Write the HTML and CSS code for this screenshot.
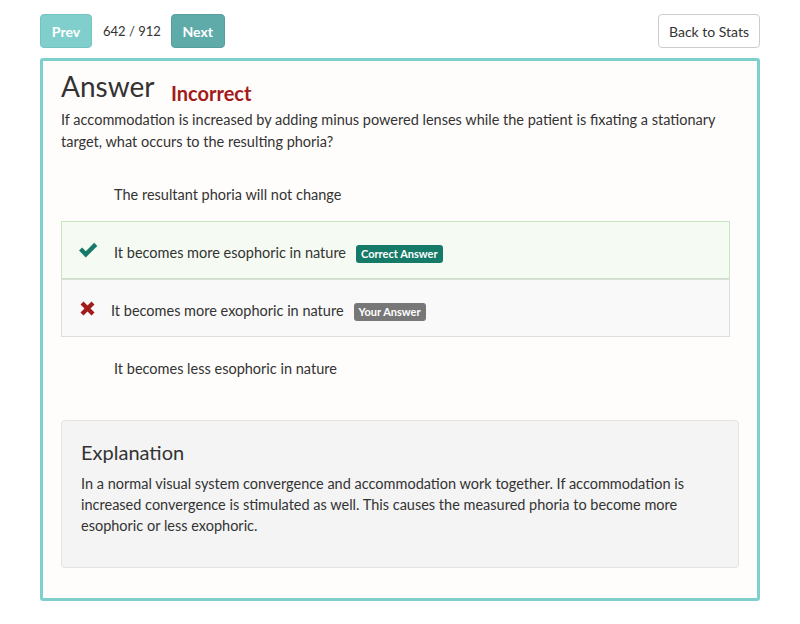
FILE: index.html
```html
<!DOCTYPE html>
<html>
<head>
<meta charset="utf-8">
<link rel="stylesheet" href="styles.css">
</head>
<body>
<div class="page">
  <div class="topbar">
    <div class="pager">
      <button class="btn btn-prev">Prev</button>
      <span class="count">642 / 912</span>
      <button class="btn btn-next">Next</button>
    </div>
    <button class="btn btn-back">Back to Stats</button>
  </div>

  <div class="card">
    <h1 class="title">Answer <span class="status">Incorrect</span></h1>
    <p class="question">If accommodation is increased by adding minus powered lenses while the patient is fixating a stationary target, what occurs to the resulting phoria?</p>

    <ul class="options">
      <li class="option">
        <span class="icon"></span>
        <span class="opt-text">The resultant phoria will not change</span>
      </li>
      <li class="option option-correct">
        <span class="icon">
          <svg width="21" height="17" viewBox="0 0 21 17"><path d="M1 8.6 L4.1 5.5 L7.8 9.2 L16.2 0.8 L19.3 3.9 L7.8 15.4 Z" fill="#17796a"/></svg>
        </span>
        <span class="opt-text">It becomes more esophoric in nature</span>
        <span class="badge badge-correct">Correct Answer</span>
      </li>
      <li class="option option-wrong">
        <span class="icon icon-x">
          <svg width="17" height="17" viewBox="0 0 17 17"><path d="M1.5 4.5 L4.5 1.5 L8.5 5.5 L12.5 1.5 L15.5 4.5 L11.5 8.5 L15.5 12.5 L12.5 15.5 L8.5 11.5 L4.5 15.5 L1.5 12.5 L5.5 8.5 Z" fill="#a11b1b"/></svg>
        </span>
        <span class="opt-text">It becomes more exophoric in nature</span>
        <span class="badge badge-yours">Your Answer</span>
      </li>
      <li class="option">
        <span class="icon"></span>
        <span class="opt-text">It becomes less esophoric in nature</span>
      </li>
    </ul>

    <div class="explanation">
      <h2 class="exp-title">Explanation</h2>
      <p class="exp-text">In a normal visual system convergence and accommodation work together. If accommodation is increased convergence is stimulated as well. This causes the measured phoria to become more esophoric or less exophoric.</p>
    </div>
  </div>
</div>
</body>
</html>
```

FILE: styles.css
```css
* { box-sizing: border-box; }
html, body { margin: 0; padding: 0; background: #ffffff; }
body {
  font-family: Lato, "Open Sans", sans-serif;
  color: #333333;
  font-size: 14.5px;
}
.page { padding: 14px 40px 0 40px; }

.topbar {
  display: flex;
  justify-content: space-between;
  align-items: center;
  height: 34px;
}
.pager { display: flex; align-items: center; }
.btn {
  font-family: Lato, "Open Sans", sans-serif;
  height: 34px;
  border-radius: 4px;
  font-size: 14px;
  cursor: pointer;
}
.btn-prev, .btn-next {
  color: #ffffff;
  font-weight: 700;
  border: 1px solid transparent;
}
.btn-prev { width: 52px; background: #80cfcd; border-color: #74c3c1; }
.btn-next { width: 54px; background: #5fabaa; border-color: #579f9e; }
.count { margin: 0 10px 0 11px; font-size: 13px; color: #333; }
.btn-back {
  width: 102px;
  background: #ffffff;
  border: 1px solid #cccccc;
  color: #333333;
}

.card {
  margin-top: 10px;
  border: 3px solid #7fcfcc;
  border-radius: 3px;
  background: #fffdfb;
  padding: 9px 18px 30px 18px;
}
.title {
  margin: 0;
  font-size: 28px;
  font-weight: 400;
  line-height: 33px;
  color: #333;
}
.status {
  display: inline-block;
  margin-left: 10px;
  font-size: 20px;
  line-height: 20px;
  font-weight: 700;
  color: #a31a1a;
  vertical-align: -4px;
}
.question {
  margin: 6px 0 0 0;
  line-height: 22px;
}

.options {
  list-style: none;
  margin: 10px 9px 0 0;
  padding: 0;
}
.option {
  display: flex;
  align-items: center;
  height: 58px;
  padding-left: 16px;
  border: 1px solid transparent;
}
.option-correct { background: #f5fbf2; border-color: #c8e3bf; }
.option-wrong { background: #f9f9f9; border-color: #dddddd; }
.icon {
  display: flex;
  align-items: center;
  width: 21px;
  height: 20px;
  margin-right: 15px;
}
.icon-x { width: 17px; margin-left: 1px; }
.opt-text { margin-top: 4px; }
.badge {
  display: inline-block;
  margin-left: 10px;
  margin-top: 7px;
  padding: 0 5px;
  height: 18px;
  line-height: 18px;
  font-size: 11px;
  font-weight: 700;
  color: #ffffff;
  border-radius: 3px;
}
.badge-correct { background: #167a68; }
.badge-yours { background: #777777; }

.explanation {
  margin-top: 25px;
  background: #f4f4f4;
  border: 1px solid #e3e3e3;
  border-radius: 4px;
  padding: 17px 19px 31px 19px;
}
.exp-title {
  margin: 0;
  font-size: 20px;
  font-weight: 400;
  line-height: 28px;
  color: #333;
}
.exp-text {
  margin: 7px 0 0 0;
  line-height: 21px;
}
```
